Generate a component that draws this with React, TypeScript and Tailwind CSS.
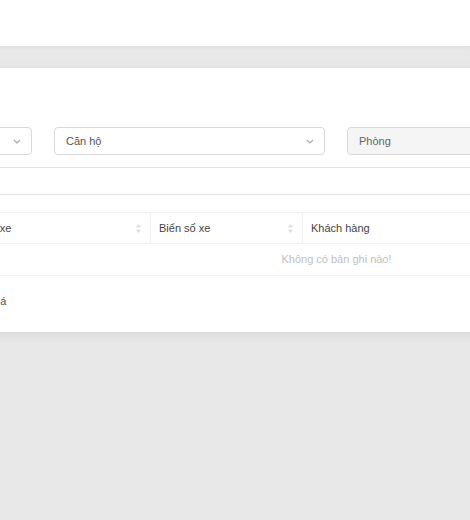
import React from "react";

function Chevron() {
  return (
    <svg width="8" height="5" viewBox="0 0 8 5" className="shrink-0">
      <path d="M1 1 L4 4 L7 1" fill="none" stroke="#a8a8a8" strokeWidth="1.1" />
    </svg>
  );
}

function SortIcon() {
  return (
    <svg width="7" height="11" viewBox="0 0 7 11" className="shrink-0">
      <path d="M3.5 1 L6.2 4.3 L0.8 4.3 Z" fill="#dcdcdc" />
      <path d="M3.5 10 L6.2 6.7 L0.8 6.7 Z" fill="#dcdcdc" />
    </svg>
  );
}

export default function App() {
  const font = { fontFamily: '"Liberation Sans", Arial, sans-serif' };
  return (
    <div className="w-[470px] h-[520px] overflow-hidden bg-[#e8e8e8] text-[11px]" style={font}>
      <div className="h-[46px] bg-white shadow-[0_1px_4px_rgba(0,0,0,0.06)]" />
      <div className="pt-[22px]">
        <div className="ml-[-255px] w-[1200px] h-[264px] bg-white shadow-[0_2px_10px_rgba(0,0,0,0.08)] px-4 pt-[59px]">
          <div className="flex gap-[22px]">
            <div className="w-[271px] h-[28px] shrink-0 border border-[#d9d9d9] rounded-[4px] bg-white flex items-center justify-end px-[10px]">
              <Chevron />
            </div>
            <div className="w-[271px] h-[28px] shrink-0 border border-[#d9d9d9] rounded-[4px] bg-white flex items-center justify-between pl-[11px] pr-[10px] text-[#555]">
              <span>Căn hộ</span>
              <Chevron />
            </div>
            <div className="w-[271px] h-[28px] shrink-0 border border-[#d9d9d9] rounded-[4px] bg-[#f5f5f5] flex items-center pl-[11px] text-[#666]">
              <span>Phòng</span>
            </div>
          </div>
          <div className="mt-[12px] h-[28px] w-[1100px] border border-[#e3e3e3] rounded-[4px] bg-white" />
          <div className="mt-[17px] w-[1151px]">
            <div className="flex h-[32px] border-t border-b border-[#f0f0f0] text-[#444]">
              <div className="w-[207px] shrink-0 flex items-center px-2">STT</div>
              <div className="w-[182px] shrink-0 flex items-center justify-between pl-2 pr-[8px]">
                <span>Loại xe</span>
                <SortIcon />
              </div>
              <div className="w-[152px] shrink-0 flex items-center justify-between pl-2 pr-[8px] border-l border-[#f0f0f0]">
                <span>Biển số xe</span>
                <SortIcon />
              </div>
              <div className="flex-1 flex items-center pl-2 border-l border-[#f0f0f0]">
                <span>Khách hàng</span>
              </div>
            </div>
            <div className="h-[32px] border-b border-[#f0f0f0] flex items-center justify-center text-[#bfbfbf]">
              Không có bản ghi nào!
            </div>
          </div>
          <div className="mt-[18px] ml-[202px] text-[#555] leading-[14px]">Bảng giá</div>
        </div>
      </div>
    </div>
  );
}
